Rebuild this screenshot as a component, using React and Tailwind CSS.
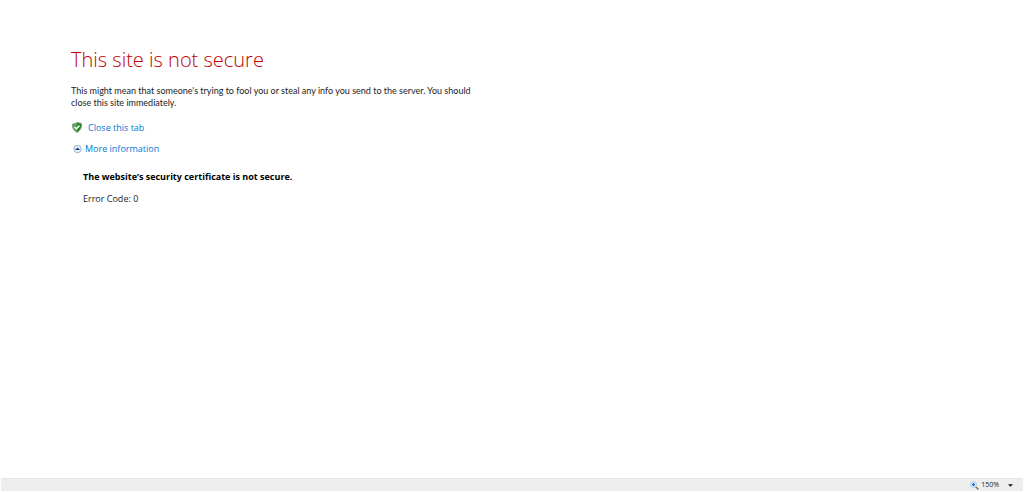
function ShieldIcon() {
  return (
    <svg viewBox="0 0 22 24" className="h-3 w-3 shrink-0" aria-hidden="true">
      <path d="M12 0c3 2 5 2 8 3 1 8-2 14-9 18C4 17 1 11 2 4c4 0 7-1 10-4z" fill="#4aa84e" stroke="#8d968d" strokeWidth="2" />
      <path d="M12 2c2 1 4 2 7 2 0 7-2 11-8 15z" fill="#157a1d" />
      <path d="M6 10l4 4 6-7" fill="none" stroke="#fff" strokeWidth="3" />
    </svg>
  )
}

function CollapseIcon() {
  return (
    <svg viewBox="0 0 18 18" className="size-[9px] shrink-0" aria-hidden="true">
      <circle cx="9" cy="8" r="7.5" fill="#e9f2fa" stroke="#7c9fc4" strokeWidth="1.5" />
      <path d="M4 10l5-5 5 5z" fill="#123f78" />
    </svg>
  )
}

function ZoomIcon() {
  return (
    <svg viewBox="0 0 18 18" className="size-[9px] shrink-0" aria-hidden="true">
      <path d="M11 11l5 5" stroke="#9a6b4b" strokeWidth="3" strokeLinecap="round" />
      <circle cx="7" cy="7" r="6" fill="#d9edfc" stroke="#a3c4e2" strokeWidth="1.5" />
      <path d="M7 4v6M4 7h6" stroke="#1769c5" strokeWidth="2.5" />
    </svg>
  )
}

export default function App() {
  return (
    <div className="flex min-h-screen flex-col bg-white font-['Open_Sans',sans-serif] text-[#222222]">
      <main className="max-w-[490px] flex-1 pt-11 pl-[71px]">
        <h1 className="text-[20px] leading-8 font-light text-[#c00000]">This site is not secure</h1>
        <p className="mt-[9px] font-['Lato',sans-serif] text-[9px] leading-3">
          This might mean that someone's trying to fool you or steal any info you send to the server. You should close this site immediately.
        </p>

        <a href="#close" className="mt-[13px] flex w-fit items-center gap-[5px] text-[9px] leading-3 text-[#0078d7]">
          <ShieldIcon />
          Close this tab
        </a>
        <a href="#details" className="mt-[9px] ml-0.5 flex w-fit items-center gap-[3px] text-[9px] leading-3 text-[#0078d7]">
          <CollapseIcon />
          More information
        </a>

        <section id="details" className="mt-4 ml-3">
          <h2 className="text-[9px] leading-3 font-bold text-black">The website’s security certificate is not secure.</h2>
          <p className="mt-[10px] text-[9px] leading-3">Error Code: 0</p>
        </section>
      </main>

      <footer className="mx-px mb-px flex h-[13px] items-center justify-end border-t border-[#e6e6e6] bg-[#eeeeee] pr-[10px]">
        <button type="button" className="flex items-center gap-0.5 text-[7px] leading-3" aria-label="Zoom level 150%">
          <ZoomIcon />
          150%
          <svg viewBox="0 0 6 3" className="ml-[7px] h-[3px] w-[5px]" aria-hidden="true">
            <path d="M0 0h6L3 3z" fill="#111" />
          </svg>
        </button>
      </footer>
    </div>
  )
}
